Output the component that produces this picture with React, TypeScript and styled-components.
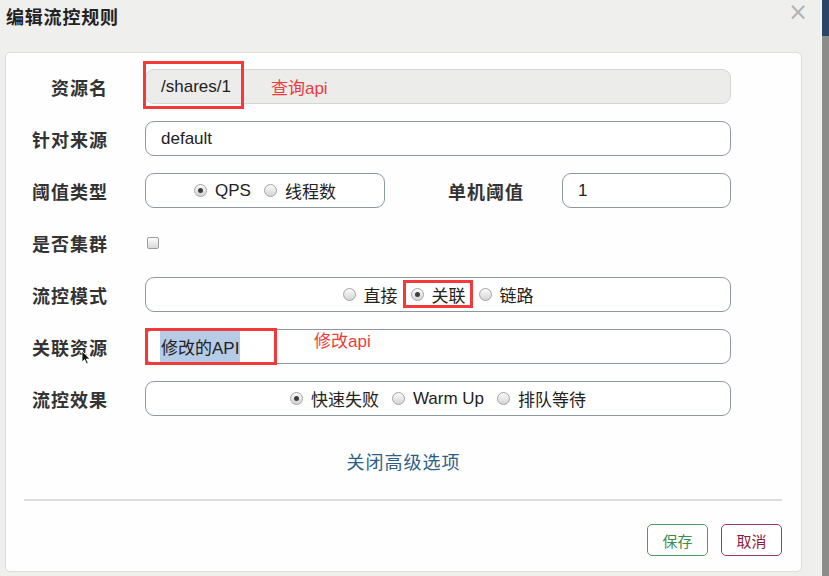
import * as React from 'react';
import styled, { createGlobalStyle } from 'styled-components';

const GlobalStyle = createGlobalStyle`
  html, body { margin: 0; padding: 0; }
  body {
    font-family: "Liberation Sans", "Noto Sans CJK SC", sans-serif;
    color: #333;
    overflow: hidden;
  }
`;

const Page = styled.div`
  display: flex;
  width: 829px;
  height: 576px;
`;

const Dialog = styled.div`
  flex: 1;
  display: flex;
  flex-direction: column;
  background: #efefed;
`;

const Header = styled.div`
  height: 52px;
  display: flex;
  justify-content: space-between;
  align-items: flex-start;
  padding: 0 13px 0 6px;
  box-sizing: border-box;
`;

const Title = styled.h4`
  margin: 6px 0 0;
  font-size: 18px;
  letter-spacing: 0.8px;
  font-weight: bold;
  color: #222;
  line-height: 24px;
`;

const Close = styled.span`
  margin-top: 2px;
  font-size: 24px;
  line-height: 20px;
  color: #b3b3b3;
  font-family: "DejaVu Sans", sans-serif;
`;

const Card = styled.div`
  flex: 1;
  margin: 0 19px 4px 5px;
  background: #fefefe;
  border: 1px solid #dcdcdc;
  border-radius: 5px;
  display: flex;
  flex-direction: column;
`;

const Form = styled.div`
  display: flex;
  flex-direction: column;
  gap: 17px;
  padding: 16px 70px 0 0;
`;

const Row = styled.div`
  display: flex;
  align-items: center;
  height: 35px;
  position: relative;
`;

const Label = styled.label<{ $width?: number; $gap?: number }>`
  width: ${(p) => p.$width ?? 102}px;
  margin-right: ${(p) => p.$gap ?? 37}px;
  flex-shrink: 0;
  text-align: right;
  font-size: 18px;
  letter-spacing: 1px;
  font-weight: bold;
  color: #333;
  font-family: "Noto Sans CJK SC", sans-serif;
`;

const Field = styled.div<{ $readOnly?: boolean }>`
  flex: 1;
  height: 35px;
  box-sizing: border-box;
  display: flex;
  align-items: center;
  position: relative;
  padding: 0 15px;
  border-radius: 9px;
  border: 1px solid ${(p) => (p.$readOnly ? '#d4d4d4' : '#8f97a4')};
  background: ${(p) => (p.$readOnly ? '#ececeb' : '#fff')};
  font-size: 17px;
  color: #222;
`;

const RadioBox = styled.div<{ $width?: number }>`
  ${(p) => (p.$width ? `width: ${p.$width}px; flex-shrink: 0;` : 'flex: 1;')}
  height: 35px;
  box-sizing: border-box;
  border: 1px solid #8f97a4;
  border-radius: 9px;
  background: #fff;
  display: flex;
  align-items: center;
  justify-content: center;
  gap: 13px;
  font-size: 17px;
  color: #222;
`;

const RadioItem = styled.span`
  display: inline-flex;
  align-items: center;
  position: relative;
`;

const Dot = styled.span<{ $checked?: boolean }>`
  width: 13px;
  height: 13px;
  border-radius: 50%;
  box-sizing: border-box;
  border: 1px solid #a3a3a3;
  background: linear-gradient(#fbfbfb, #d4d4d4);
  display: inline-flex;
  align-items: center;
  justify-content: center;
  margin-right: 8px;
  &::after {
    content: '';
    width: 5px;
    height: 5px;
    border-radius: 50%;
    background: ${(p) => (p.$checked ? '#3d3d3d' : 'transparent')};
  }
`;

const Check = styled.span`
  width: 12px;
  height: 12px;
  margin-left: 2px;
  box-sizing: border-box;
  border: 1px solid #9c9c9c;
  border-radius: 2px;
  background: linear-gradient(#fdfdfd, #d9d9d9);
`;

const RedFrame = styled.span<{ $t: number; $l: number; $w: number; $h: number }>`
  position: absolute;
  top: ${(p) => p.$t}px;
  left: ${(p) => p.$l}px;
  width: ${(p) => p.$w}px;
  height: ${(p) => p.$h}px;
  box-sizing: border-box;
  border: 3px solid #f23a3a;
  pointer-events: none;
`;

const Note = styled.span<{ $abs?: boolean }>`
  color: #f03a3a;
  font-size: 17px;
  ${(p) =>
    p.$abs ? 'position: absolute; left: 168px; top: -3px;' : 'margin-left: 40px;'}
`;

const Selected = styled.span`
  background: #b5cbe6;
  padding: 3px 1px;
  margin-left: -1px;
`;

const Cursor = styled.svg`
  position: absolute;
  left: 75px;
  top: 21px;
`;

const LinkRow = styled.div`
  text-align: center;
  margin-top: 33px;
  line-height: 24px;
  font-size: 18px;
  letter-spacing: 1px;
  color: #2b5e88;
  font-family: "Noto Sans CJK SC", sans-serif;
`;

const Divider = styled.div`
  height: 2px;
  background: #dddddc;
  margin: 26px 19px 0 18px;
`;

const Footer = styled.div`
  display: flex;
  justify-content: flex-end;
  gap: 13px;
  padding: 23px 19px 0 0;
`;

const Button = styled.button<{ $tone: 'save' | 'cancel' }>`
  width: 61px;
  height: 32px;
  border-radius: 5px;
  background: #fff;
  font-size: 15px;
  font-family: "Noto Sans CJK SC", sans-serif;
  border: 1px solid ${(p) => (p.$tone === 'save' ? '#4a9a62' : '#9c3a5a')};
  color: ${(p) => (p.$tone === 'save' ? '#3c8c50' : '#8a1c3e')};
`;

const Strip = styled.div`
  width: 7px;
  display: flex;
  flex-direction: column;
  border-left: 1px solid #f6f6f6;
  background: #8c8c8a;
`;

const StripTop = styled.div`
  height: 36px;
  background: #2c4466;
`;

const Radio = ({ label, checked }: { label: string; checked?: boolean }) => (
  <RadioItem>
    <Dot $checked={checked} />
    {label}
  </RadioItem>
);

export default function App() {
  return (
    <Page>
      <GlobalStyle />
      <Dialog>
        <Header>
          <Title>编辑流控规则</Title>
          <Close>×</Close>
        </Header>
        <Card>
          <Form>
            <Row>
              <Label>资源名</Label>
              <Field $readOnly>
                <span>/shares/1</span>
                <Note>查询api</Note>
                <RedFrame $t={-9} $l={-3} $w={101} $h={48} />
              </Field>
            </Row>
            <Row>
              <Label>针对来源</Label>
              <Field>default</Field>
            </Row>
            <Row>
              <Label>阈值类型</Label>
              <RadioBox $width={240}>
                <Radio label="QPS" checked />
                <Radio label="线程数" />
              </RadioBox>
              <Label $width={139} $gap={38}>
                单机阈值
              </Label>
              <Field>1</Field>
            </Row>
            <Row>
              <Label>是否集群</Label>
              <Check />
            </Row>
            <Row>
              <Label>流控模式</Label>
              <RadioBox>
                <Radio label="直接" />
                <RadioItem>
                  <Dot $checked />
                  关联
                  <RedFrame $t={-2} $l={-8} $w={70} $h={28} />
                </RadioItem>
                <Radio label="链路" />
              </RadioBox>
            </Row>
            <Row>
              <Label>关联资源</Label>
              <Field>
                <Selected>修改的API</Selected>
                <Note $abs>修改api</Note>
                <RedFrame $t={-2} $l={-1} $w={132} $h={37} />
              </Field>
              <Cursor width="10" height="15" viewBox="0 0 10 15">
                <path d="M1 1 L1 12 L3.6 9.6 L5.6 14 L7.2 13.3 L5.3 9 L8.8 9 Z" fill="#111" stroke="#fff" strokeWidth="0.8" />
              </Cursor>
            </Row>
            <Row>
              <Label>流控效果</Label>
              <RadioBox>
                <Radio label="快速失败" checked />
                <Radio label="Warm Up" />
                <Radio label="排队等待" />
              </RadioBox>
            </Row>
          </Form>
          <LinkRow>关闭高级选项</LinkRow>
          <Divider />
          <Footer>
            <Button $tone="save">保存</Button>
            <Button $tone="cancel">取消</Button>
          </Footer>
        </Card>
      </Dialog>
      <Strip>
        <StripTop />
      </Strip>
    </Page>
  );
}
